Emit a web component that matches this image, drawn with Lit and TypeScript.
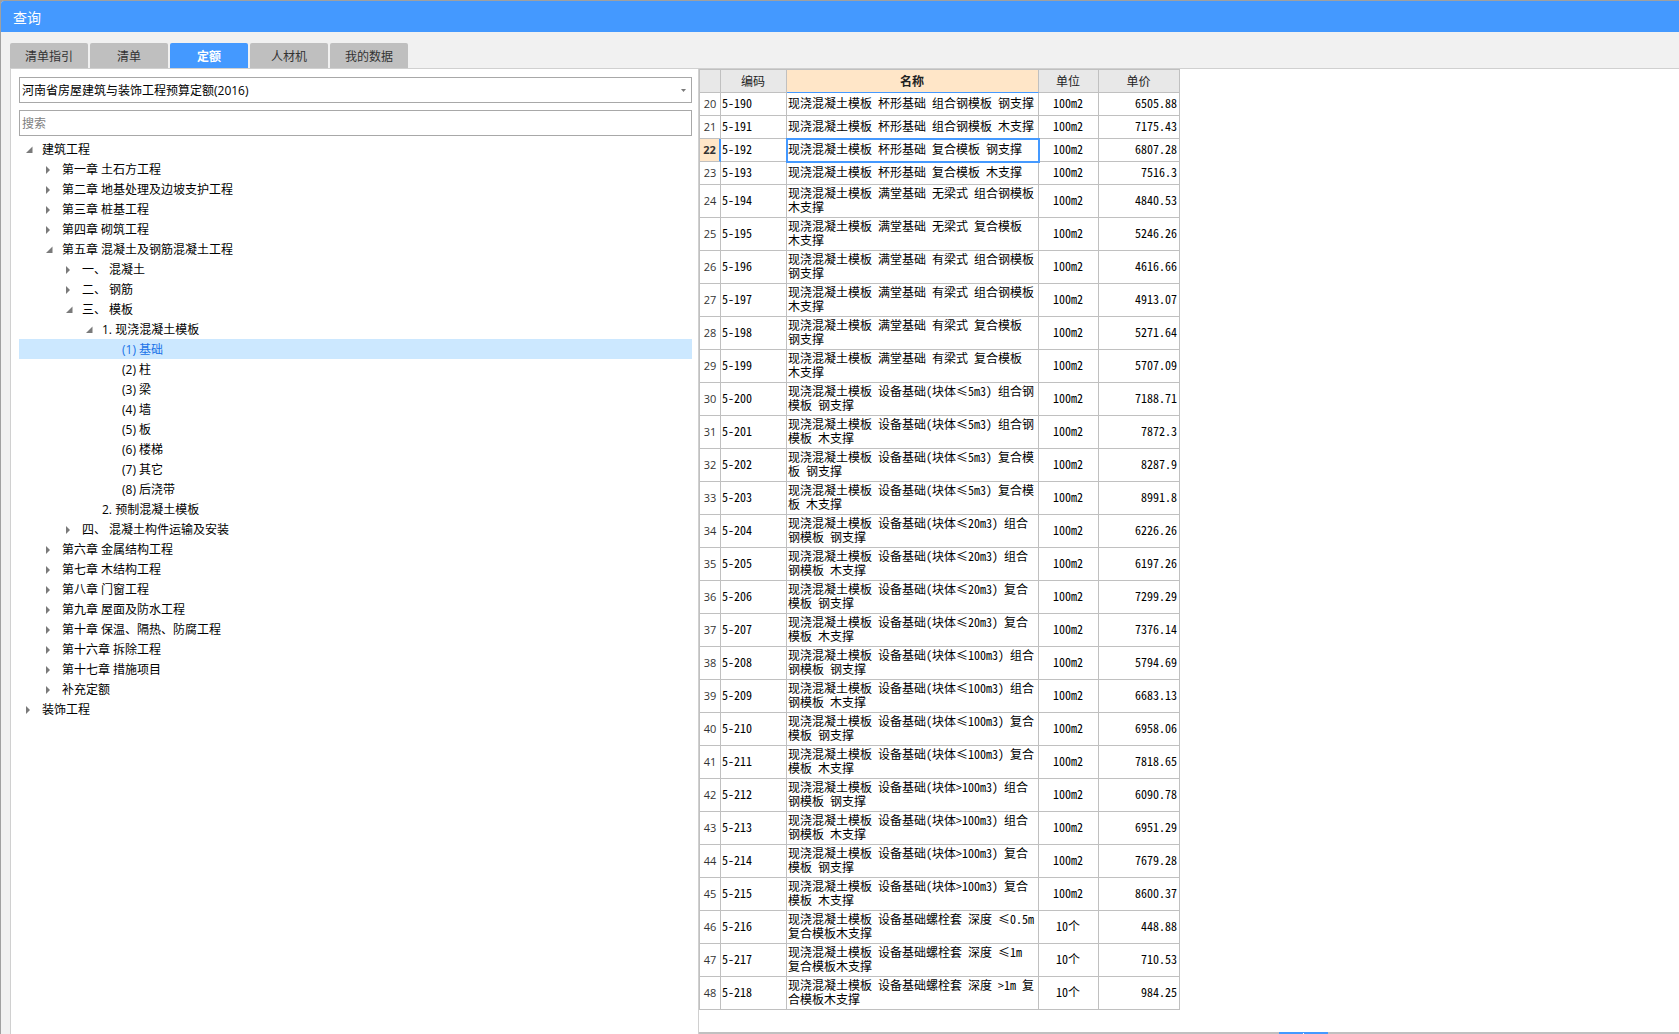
import { LitElement, html, css, svg, nothing, TemplateResult } from "lit";
import { customElement, state } from "lit/decorators.js";
import { classMap } from "lit/directives/class-map.js";
import { styleMap } from "lit/directives/style-map.js";

interface TreeNode {
  label: string;
  expandable?: boolean;
  open?: boolean;
  children?: TreeNode[];
}

interface Row {
  no: number;
  code: string;
  name: string;
  unit: string;
  price: string;
}

const closed = (label: string): TreeNode => ({ label, expandable: true });
const leaf = (label: string): TreeNode => ({ label });
const opened = (label: string, children: TreeNode[]): TreeNode => ({
  label,
  expandable: true,
  open: true,
  children,
});

const TREE: TreeNode[] = [
  opened("建筑工程", [
    closed("第一章 土石方工程"),
    closed("第二章 地基处理及边坡支护工程"),
    closed("第三章 桩基工程"),
    closed("第四章 砌筑工程"),
    opened("第五章 混凝土及钢筋混凝土工程", [
      closed("一、 混凝土"),
      closed("二、 钢筋"),
      opened("三、 模板", [
        opened("1. 现浇混凝土模板", [
          leaf("(1) 基础"),
          leaf("(2) 柱"),
          leaf("(3) 梁"),
          leaf("(4) 墙"),
          leaf("(5) 板"),
          leaf("(6) 楼梯"),
          leaf("(7) 其它"),
          leaf("(8) 后浇带"),
        ]),
        leaf("2. 预制混凝土模板"),
      ]),
      closed("四、 混凝土构件运输及安装"),
    ]),
    closed("第六章 金属结构工程"),
    closed("第七章 木结构工程"),
    closed("第八章 门窗工程"),
    closed("第九章 屋面及防水工程"),
    closed("第十章 保温、隔热、防腐工程"),
    closed("第十六章 拆除工程"),
    closed("第十七章 措施项目"),
    closed("补充定额"),
  ]),
  closed("装饰工程"),
];

const PREFIX = "现浇混凝土模板";
const ITEMS: [string, string][] = [
  ["杯形基础 组合钢模板 钢支撑", "6505.88"],
  ["杯形基础 组合钢模板 木支撑", "7175.43"],
  ["杯形基础 复合模板 钢支撑", "6807.28"],
  ["杯形基础 复合模板 木支撑", "7516.3"],
  ["满堂基础 无梁式 组合钢模板 木支撑", "4840.53"],
  ["满堂基础 无梁式 复合模板 木支撑", "5246.26"],
  ["满堂基础 有梁式 组合钢模板 钢支撑", "4616.66"],
  ["满堂基础 有梁式 组合钢模板 木支撑", "4913.07"],
  ["满堂基础 有梁式 复合模板 钢支撑", "5271.64"],
  ["满堂基础 有梁式 复合模板 木支撑", "5707.09"],
  ["设备基础(块体≤5m3) 组合钢模板 钢支撑", "7188.71"],
  ["设备基础(块体≤5m3) 组合钢模板 木支撑", "7872.3"],
  ["设备基础(块体≤5m3) 复合模板 钢支撑", "8287.9"],
  ["设备基础(块体≤5m3) 复合模板 木支撑", "8991.8"],
  ["设备基础(块体≤20m3) 组合钢模板 钢支撑", "6226.26"],
  ["设备基础(块体≤20m3) 组合钢模板 木支撑", "6197.26"],
  ["设备基础(块体≤20m3) 复合模板 钢支撑", "7299.29"],
  ["设备基础(块体≤20m3) 复合模板 木支撑", "7376.14"],
  ["设备基础(块体≤100m3) 组合钢模板 钢支撑", "5794.69"],
  ["设备基础(块体≤100m3) 组合钢模板 木支撑", "6683.13"],
  ["设备基础(块体≤100m3) 复合模板 钢支撑", "6958.06"],
  ["设备基础(块体≤100m3) 复合模板 木支撑", "7818.65"],
  ["设备基础(块体>100m3) 组合钢模板 钢支撑", "6090.78"],
  ["设备基础(块体>100m3) 组合钢模板 木支撑", "6951.29"],
  ["设备基础(块体>100m3) 复合模板 钢支撑", "7679.28"],
  ["设备基础(块体>100m3) 复合模板 木支撑", "8600.37"],
  ["设备基础螺栓套 深度 ≤0.5m 复合模板木支撑", "448.88"],
  ["设备基础螺栓套 深度 ≤1m 复合模板木支撑", "710.53"],
  ["设备基础螺栓套 深度 >1m 复合模板木支撑", "984.25"],
];

const ROWS: Row[] = ITEMS.map(([name, price], i) => ({
  no: 20 + i,
  code: `5-${190 + i}`,
  name: `${PREFIX} ${name}`,
  unit: i < 26 ? "100m2" : "10个",
  price,
}));

@customElement("quota-tree")
export class QuotaTree extends LitElement {
  @state() private selected = "(1) 基础";
  @state() private nodes = TREE;

  static styles = css`
    :host {
      display: block;
    }
    ul {
      margin: 0;
      padding: 0;
      list-style: none;
    }
    .row {
      display: flex;
      align-items: center;
      width: 100%;
      height: 20px;
      margin: 0;
      padding: 2px 0 0;
      border: 0;
      background: none;
      color: #000;
      font: inherit;
      text-align: left;
      white-space: pre;
    }
    .row.selected {
      background: #cce8ff;
      color: #1a73e8;
    }
    .arrow {
      flex: none;
      width: 8px;
      height: 10px;
      margin: 0 8px 0 7px;
      fill: #7a7a7a;
    }
  `;

  private pick(node: TreeNode) {
    if (node.children) {
      node.open = !node.open;
      this.nodes = [...this.nodes];
    } else {
      this.selected = node.label;
    }
  }

  private arrow(node: TreeNode) {
    const shape = !node.expandable
      ? nothing
      : node.open
        ? svg`<path d="M6.5 1.5 V8 H0 Z"></path>`
        : svg`<path d="M0 1 L4 5 L0 9 Z"></path>`;
    return html`<svg class="arrow" viewBox="0 0 8 10" aria-hidden="true">${shape}</svg>`;
  }

  private branch(nodes: TreeNode[], level: number): TemplateResult {
    return html`<ul>
      ${nodes.map(
        (node) => html`<li>
          <button
            class=${classMap({ row: true, selected: node.label === this.selected })}
            style=${styleMap({ paddingLeft: `${level * 20}px` })}
            @click=${() => this.pick(node)}
          >${this.arrow(node)}<span>${node.label}</span></button>
          ${node.open && node.children ? this.branch(node.children, level + 1) : nothing}
        </li>`
      )}
    </ul>`;
  }

  render() {
    return this.branch(this.nodes, 0);
  }
}

@customElement("quota-table")
export class QuotaTable extends LitElement {
  @state() private current = 22;

  static styles = css`
    :host {
      display: block;
    }
    table {
      width: 481px;
      table-layout: fixed;
      border-collapse: separate;
      border-spacing: 0;
      border-left: 1px solid #c0c0c0;
      color: #000;
      font: 12px/14px "Noto Sans CJK SC", sans-serif;
    }
    .c-no {
      width: 21px;
    }
    .c-code {
      width: 66px;
    }
    .c-name {
      width: 252px;
    }
    .c-unit {
      width: 60px;
    }
    th,
    td {
      box-sizing: border-box;
      height: 23px;
      padding: 1px 2px 3px 1px;
      border-right: 1px solid #c0c0c0;
      border-bottom: 1px solid #c0c0c0;
      font-weight: 400;
      text-align: left;
      vertical-align: middle;
    }
    td {
      font-feature-settings: "hwid";
    }
    thead th {
      height: 24px;
      padding: 2px 2px 2px 1px;
      border-top: 1px solid #c0c0c0;
      background: #e8e8e8;
      color: #222;
      text-align: center;
    }
    thead .active {
      border-bottom-color: #4499ff;
      background: #ffe6c8;
      font-weight: 700;
    }
    tbody th {
      padding: 2px 0;
      color: #333;
      font-family: "Open Sans", "Noto Sans CJK SC", sans-serif;
      font-size: 11px;
      text-align: center;
    }
    .current th {
      border-right: 2px solid #4499ff;
      background: #ffe6c8;
      font-weight: 700;
    }
    .current .name {
      outline: 2px solid #4499ff;
      outline-offset: -1px;
    }
    .unit {
      text-align: center;
    }
    .price {
      text-align: right;
    }
  `;

  render() {
    return html`<table>
      <colgroup>
        <col class="c-no" /><col class="c-code" /><col class="c-name" /><col class="c-unit" /><col />
      </colgroup>
      <thead>
        <tr>
          <th></th>
          <th scope="col">编码</th>
          <th scope="col" class="active">名称</th>
          <th scope="col">单位</th>
          <th scope="col">单价</th>
        </tr>
      </thead>
      <tbody>
        ${ROWS.map(
          (r) => html`<tr
            class=${classMap({ current: r.no === this.current })}
            @click=${() => (this.current = r.no)}
          >
            <th scope="row">${r.no}</th>
            <td>${r.code}</td>
            <td class="name">${r.name}</td>
            <td class="unit">${r.unit}</td>
            <td class="price">${r.price}</td>
          </tr>`
        )}
      </tbody>
    </table>`;
  }
}

@customElement("app-root")
export class AppRoot extends LitElement {
  @state() private tab = "定额";

  static styles = css`
    :host {
      display: block;
      background: #a0a0a0;
      font: 12px/16px "Open Sans", "Noto Sans CJK SC", sans-serif;
    }
    .window {
      display: flex;
      flex-direction: column;
      box-sizing: border-box;
      height: 100vh;
      overflow: hidden;
      border: solid #a0a0a0;
      border-width: 1px 0 0 1px;
      border-top-left-radius: 4px;
      background: #f1f1f1;
    }
    .title {
      flex: none;
      height: 31px;
      margin: 0;
      padding-left: 12px;
      background: #4499ff;
      color: #fff;
      font-size: 14px;
      font-weight: 400;
      line-height: 34px;
    }
    .tabs {
      display: flex;
      flex: none;
      gap: 2px;
      padding: 11px 0 0 9px;
    }
    .tab {
      width: 78px;
      height: 25px;
      padding: 2px 0 0;
      border: 0;
      border-radius: 2px 2px 0 0;
      background: #bfbfbf;
      color: #333;
      font: inherit;
    }
    .tab.active {
      background: #4499ff;
      color: #fff;
      font-weight: 700;
    }
    .panes {
      display: grid;
      flex: 1;
      grid-template-columns: minmax(0, 687fr) minmax(0, 981fr);
      min-height: 0;
      margin-left: 9px;
      border-top: 1px solid #d0d0d0;
      border-left: 1px solid #d0d0d0;
      background: #fff;
    }
    .side {
      display: flex;
      flex-direction: column;
      min-height: 0;
      padding: 8px 6px 0 8px;
    }
    .combo {
      display: grid;
      align-items: center;
      margin-bottom: 7px;
    }
    .combo select,
    .search {
      box-sizing: border-box;
      width: 100%;
      height: 26px;
      margin: 0;
      padding: 1px 2px 0;
      border: 1px solid #a8a8a8;
      border-radius: 0;
      outline: 0;
      background: #fff;
      color: #000;
      font: inherit;
    }
    .combo select {
      grid-area: 1 / 1;
      appearance: none;
    }
    .combo svg {
      grid-area: 1 / 1;
      justify-self: end;
      width: 5px;
      height: 3px;
      margin-right: 6px;
      fill: #7a7a7a;
      pointer-events: none;
    }
    .search {
      margin-bottom: 3px;
    }
    .search::placeholder {
      color: #808080;
      opacity: 1;
    }
    .main {
      display: flex;
      flex-direction: column;
      justify-content: space-between;
      min-height: 0;
      border-left: 1px solid #d0d0d0;
    }
    .splitter {
      display: grid;
      flex: none;
      grid-template-columns: 580fr 49px 351fr;
      height: 2px;
      background: #c0c0c0;
    }
    .grip {
      display: grid;
      grid-column: 2;
      justify-content: center;
      align-content: end;
      height: 2px;
      padding: 0;
      border: 0;
      background: #4499ff;
    }
    .dot {
      width: 1px;
      height: 1px;
      background: #fff;
    }
  `;

  render() {
    const tabs = ["清单指引", "清单", "定额", "人材机", "我的数据"];
    return html`<div class="window">
      <h1 class="title">查询</h1>
      <nav class="tabs">
        ${tabs.map(
          (t) => html`<button
            class=${classMap({ tab: true, active: t === this.tab })}
            @click=${() => (this.tab = t)}
          >${t}</button>`
        )}
      </nav>
      <div class="panes">
        <section class="side">
          <div class="combo">
            <select aria-label="定额库">
              <option>河南省房屋建筑与装饰工程预算定额(2016)</option>
            </select>
            <svg viewBox="0 0 5 3" aria-hidden="true"><path d="M0 0 H5 L2.5 3 Z"></path></svg>
          </div>
          <input class="search" type="text" placeholder="搜索" aria-label="搜索" />
          <quota-tree></quota-tree>
        </section>
        <section class="main">
          <quota-table></quota-table>
          <div class="splitter">
            <button class="grip" aria-label="展开"><span class="dot"></span></button>
          </div>
        </section>
      </div>
    </div>`;
  }
}
